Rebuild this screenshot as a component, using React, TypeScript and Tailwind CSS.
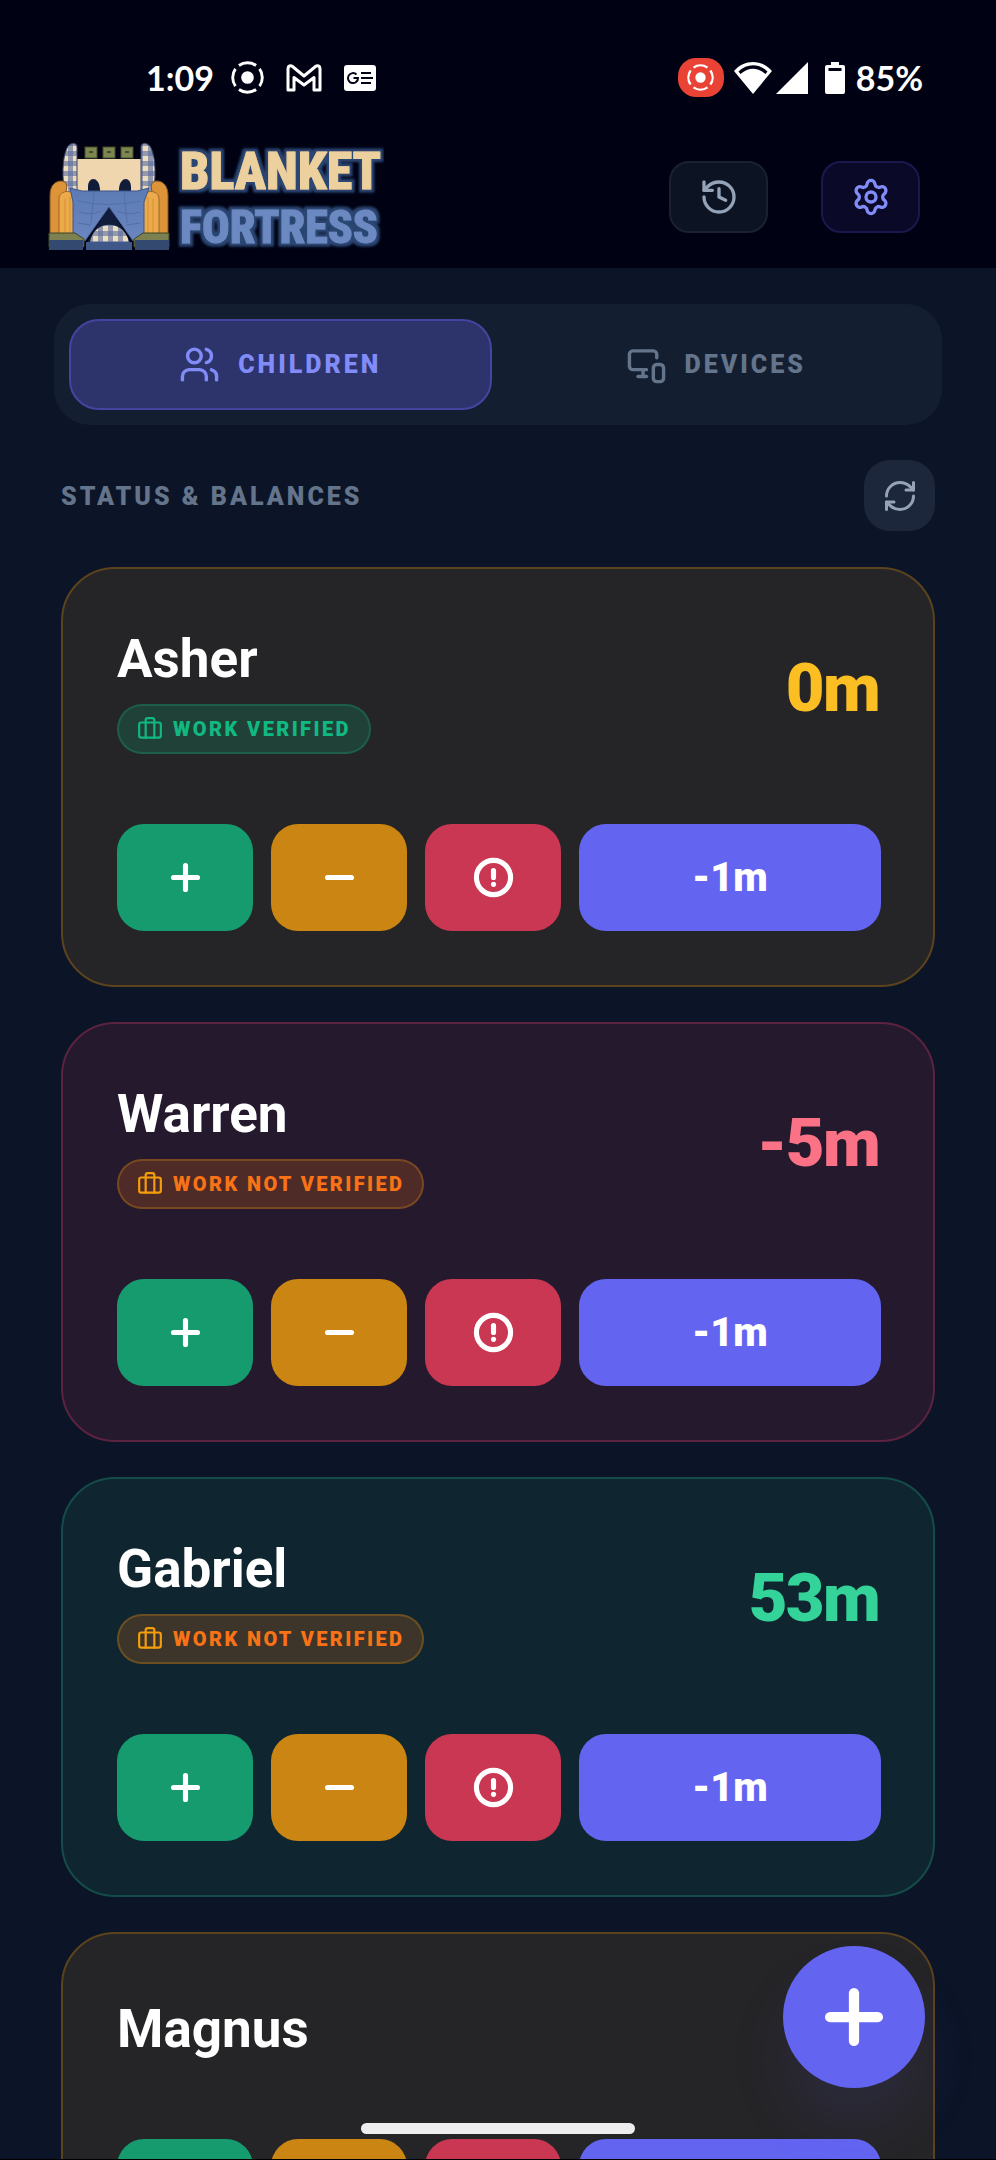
import {
  Briefcase,
  CircleAlert,
  History,
  Minus,
  MonitorSmartphone,
  Plus,
  RefreshCw,
  Settings,
  Users,
} from "lucide-react";

type Tone = "amber" | "rose" | "emerald";

interface Child {
  name: string;
  balance: string;
  tone: Tone;
  work?: "verified" | "pending";
}

const children: Child[] = [
  { name: "Asher", balance: "0m", tone: "amber", work: "verified" },
  { name: "Warren", balance: "-5m", tone: "rose", work: "pending" },
  { name: "Gabriel", balance: "53m", tone: "emerald", work: "pending" },
  { name: "Magnus", balance: "0m", tone: "amber" },
];

const cardTones: Record<Tone, string> = {
  amber: "border-[#5b431d] bg-[#252426]",
  rose: "border-[#5c2340] bg-[#25192d]",
  emerald: "border-[#144c49] bg-[#0f2630]",
};

const balanceTones: Record<Tone, string> = {
  amber: "text-[#fbbf24]",
  rose: "text-[#fb7185]",
  emerald: "text-[#34d399]",
};

function RecordGlyph({ className }: { className: string }) {
  return (
    <svg viewBox="0 0 34 34" className={className} fill="none" stroke="currentColor" strokeWidth="3" aria-hidden="true">
      <circle cx="17" cy="17" r="6.5" fill="currentColor" stroke="none" />
      <path d="M8.2 4.6a15 15 0 0 1 17.6 0M8.2 29.4a15 15 0 0 0 17.6 0M4.6 8.2a15 15 0 0 0 0 17.6M29.4 8.2a15 15 0 0 1 0 17.6" />
    </svg>
  );
}

function StatusBar() {
  return (
    <div className="flex h-[141px] items-center justify-between pt-3.5 pr-[73px] pl-[146px] font-['Lato',sans-serif] text-[34px] leading-10 font-bold text-white">
      <div className="flex items-center">
        <span>1:09</span>
        <RecordGlyph className="ml-[17px] size-[33px]" />
        <svg viewBox="0 0 36 28" className="ml-[22px] h-7 w-9" fill="none" stroke="currentColor" strokeWidth="3" strokeLinejoin="round" aria-hidden="true">
          <path d="M2 26V4.500C2 2 4.500 1 6.500 2.500L18 12 29.500 2.500C31.500 1 34 2 34 4.500V26H28V13.500L18 21 8 13.500V26Z" />
        </svg>
        <svg viewBox="0 0 32 26" className="ml-[22px] h-[26px] w-8" fill="none" aria-hidden="true">
          <rect width="32" height="26" rx="3" fill="#fff" />
          <path d="M12.500 9.500A5 5 0 1 0 14 13H9.500" stroke="#000213" strokeWidth="2" />
          <path d="M17 8h10M17 13h12M17 18h10" stroke="#000213" strokeWidth="2.200" />
        </svg>
      </div>
      <div className="flex items-center">
        <span className="flex h-[39px] w-[46px] items-center justify-center rounded-[18px] bg-[#ea4335]">
          <RecordGlyph className="size-[27px]" />
        </span>
        <svg viewBox="0 0 38 32" className="ml-[10px] h-8 w-[38px]" aria-hidden="true">
          <path d="M0 9C10-3 28-3 38 9L19 32Z" fill="#fff" />
          <path d="M4.500 9.500C13 1 25 1 33.500 9.500L31.500 12C23 5 15 5 6.500 12Z" fill="#000213" />
        </svg>
        <svg viewBox="0 0 32 32" className="ml-1 size-8" fill="#fff" aria-hidden="true">
          <path d="M32 0V32H0Z" />
        </svg>
        <svg viewBox="0 0 20 32" className="ml-[17px] h-8 w-5" fill="#fff" aria-hidden="true">
          <path d="M6 0h8v3h4a2 2 0 0 1 2 2v25a2 2 0 0 1-2 2H2a2 2 0 0 1-2-2V5a2 2 0 0 1 2-2h4Z" />
          <path d="M3.500 6h13v3h-13Z" fill="#000213" />
        </svg>
        <span className="ml-[11px]">85%</span>
      </div>
    </div>
  );
}

function Logo() {
  return (
    <svg viewBox="0 0 336 112" className="h-28 w-[336px]" role="img" aria-label="Blanket Fortress">
      <defs>
        <pattern id="gingham" width="10" height="10" patternUnits="userSpaceOnUse">
          <rect width="10" height="10" fill="#ecdcc0" />
          <rect width="5" height="10" fill="#5a6a9c" opacity=".6" />
          <rect width="10" height="5" fill="#5a6a9c" opacity=".6" />
        </pattern>
        <linearGradient id="quilt" x1="0" y1="0" x2="0" y2="1">
          <stop offset="0" stopColor="#5c7ab4" />
          <stop offset="1" stopColor="#6a86c0" />
        </linearGradient>
        <filter id="outline" x="-10%" y="-20%" width="120%" height="140%">
          <feMorphology in="SourceAlpha" operator="dilate" radius="3" result="grown" />
          <feGaussianBlur in="grown" stdDeviation="1" result="soft" />
          <feFlood floodColor="#2b4673" />
          <feComposite in2="soft" operator="in" result="edge" />
          <feMerge>
            <feMergeNode in="edge" />
            <feMergeNode in="SourceGraphic" />
          </feMerge>
        </filter>
      </defs>

      <path d="M28 18H96V54H28Z" fill="#f0d6ae" />
      <path d="M40 52V46C40 35 51 35 52 48V52ZM71 52V48C72 35 83 35 83 46V52Z" fill="#101c38" />
      <path d="M17 56C14 36 14 18 19 7C22 1 29 1 29 6V56Z" fill="url(#gingham)" stroke="#3c476c" />
      <path d="M105 56C108 36 108 18 103 7C100 1 93 1 93 6V56Z" fill="url(#gingham)" stroke="#3c476c" />
      <g fill="#7d8650" stroke="#444d2a">
        <rect x="37" y="6" width="12" height="11" />
        <rect x="55" y="6" width="12" height="11" />
        <rect x="73" y="6" width="12" height="11" />
      </g>
      <path d="M41 11h4M59 11h4M77 11h4" stroke="#444d2a" strokeWidth="2" />

      <path d="M2 95V54C2 45 7 40 13 40C18 40 20 44 18 50V95Z" fill="#dd9438" stroke="#7f5323" />
      <path d="M120 95V54C120 45 115 40 109 40C104 40 102 44 104 50V95Z" fill="#dd9438" stroke="#7f5323" />
      <path d="M11 95V58C11 48 27 48 28 58V95Z" fill="#edaa4b" stroke="#9a672b" />
      <path d="M111 95V58C111 48 95 48 94 58V95Z" fill="#edaa4b" stroke="#9a672b" />
      <path d="M17 58V92M22 56V92M100 56V92M105 58V92" stroke="#d18e39" />

      <path d="M38 103L61 66 84 103Z" fill="#121d3b" />
      <path d="M42 101C46 78 76 78 81 101Z" fill="url(#gingham)" />
      <path d="M22 47L34 50H89L101 47L96 61V94L85 100L61 66 37 100 25 93V61Z" fill="url(#quilt)" stroke="#3e578a" />
      <path d="M30 60Q60 67 92 60M31 71Q45 75 53 70M69 70Q79 75 92 71M30 82L43 84M78 84L92 82M46 51L43 82M76 51L79 82" stroke="#5270a8" fill="none" />

      <path d="M1 92H27L36 98V106H1ZM121 92H95L86 98V106H121Z" fill="#7b8150" stroke="#3d4426" />
      <path d="M1 99H35V109H1ZM121 99H87V109H121Z" fill="#34496f" />
      <path d="M38 101H84V109H38Z" fill="#3f5789" />

      <g
        fontFamily="'Roboto Condensed', 'Liberation Sans Narrow', 'Liberation Serif', serif"
        fontWeight="800"
        strokeWidth="1"
        strokeLinejoin="round"
        filter="url(#outline)"
      >
        <text x="132" y="48" fontSize="52" fill="#ecd09e" stroke="#ecd09e">
          BLANKET
        </text>
        <text x="132" y="102" fontSize="46" fill="#6c89c2" stroke="#6c89c2">
          FORTRESS
        </text>
      </g>
    </svg>
  );
}

function WorkBadge({ verified }: { verified: boolean }) {
  return (
    <span
      className={`flex h-[50px] items-center gap-[10px] rounded-full border-2 px-[18px] text-[20px] leading-6 font-black tracking-[0.12em] uppercase ${
        verified
          ? "border-[#10b981]/25 bg-[#10b981]/20 text-[#10b981]"
          : "border-[#f59e0b]/25 bg-[#f97316]/20 text-[#f97316]"
      }`}
    >
      <Briefcase
        className={verified ? "size-[26px] text-[#10b981]" : "size-[26px] text-[#f59e0b]"}
        strokeWidth={2}
        aria-hidden="true"
      />
      {verified ? "Work verified" : "Work not verified"}
    </span>
  );
}

function ChildCard({ child }: { child: Child }) {
  const button = "flex h-[107px] items-center justify-center rounded-[27px] text-white";

  return (
    <article className={`rounded-[54px] border-2 py-[54px] pr-[52px] pl-[54px] ${cardTones[child.tone]}`}>
      <div className="flex items-center justify-between pr-0.5">
        <div className="flex flex-col items-start gap-[9px]">
          <h3 className="text-[53px] leading-[72px] font-bold text-white">{child.name}</h3>
          {child.work && <WorkBadge verified={child.work === "verified"} />}
        </div>
        <p className={`text-[67px] leading-[81px] font-black tracking-tight ${balanceTones[child.tone]}`}>
          {child.balance}
        </p>
      </div>

      <div className="mt-[70px] grid grid-cols-[1fr_1fr_1fr_2.22fr] gap-[18px]">
        <button type="button" aria-label={`Add time for ${child.name}`} className={`${button} bg-[#169b6f]`}>
          <Plus size={41} strokeWidth={3} />
        </button>
        <button type="button" aria-label={`Remove time for ${child.name}`} className={`${button} bg-[#ca8512]`}>
          <Minus size={41} strokeWidth={3} />
        </button>
        <button type="button" aria-label={`Penalty for ${child.name}`} className={`${button} bg-[#ca3753]`}>
          <CircleAlert size={41} strokeWidth={3} />
        </button>
        <button type="button" className={`${button} bg-[#6364f0] text-[40px] leading-none font-black`}>
          -1m
        </button>
      </div>
    </article>
  );
}

export default function App() {
  return (
    <div className="relative flex h-screen flex-col overflow-hidden border-b border-black bg-[#0c1527] font-['Roboto',sans-serif]">
      <header className="shrink-0 bg-[#000213] pb-[15px]">
        <StatusBar />
        <div className="flex items-center justify-between pr-[76px] pl-12">
          <Logo />
          <div className="flex gap-[53px]">
            <button
              type="button"
              aria-label="History"
              className="flex h-[72px] w-[99px] items-center justify-center rounded-[20px] border-2 border-[#1a2130] bg-[#0c1424] text-[#94a3b8]"
            >
              <History size={40} />
            </button>
            <button
              type="button"
              aria-label="Settings"
              className="flex h-[72px] w-[99px] items-center justify-center rounded-[20px] border-2 border-[#1a184c] bg-[#0a0a28] text-[#818cf8]"
            >
              <Settings size={40} />
            </button>
          </div>
        </div>
      </header>

      <main className="flex min-h-0 flex-1 flex-col">
        <div role="tablist" className="mx-[54px] mt-9 flex shrink-0 gap-[13px] rounded-[36px] bg-[#131f30] p-[15px]">
          <button
            type="button"
            role="tab"
            aria-selected="true"
            className="flex h-[91px] flex-1 items-center justify-center gap-[18px] rounded-[30px] border-2 border-[#4644a0] bg-[#2d336b] text-[25px] font-black tracking-[0.12em] text-[#818cf8] uppercase"
          >
            <Users size={41} />
            Children
          </button>
          <button
            type="button"
            role="tab"
            aria-selected="false"
            className="flex h-[91px] flex-1 items-center justify-center gap-[18px] rounded-[30px] border-2 border-transparent text-[25px] font-black tracking-[0.12em] text-[#64748b] uppercase"
          >
            <MonitorSmartphone size={41} />
            Devices
          </button>
        </div>

        <section className="mt-[35px] px-[61px]">
          <div className="flex items-center justify-between">
            <h2 className="pt-0.5 text-[25px] font-black tracking-[0.12em] text-[#64748b] uppercase">
              Status &amp; balances
            </h2>
            <button
              type="button"
              aria-label="Refresh"
              className="flex size-[71px] items-center justify-center rounded-[26px] bg-[#1d273b] text-[#94a3b8]"
            >
              <RefreshCw size={36} />
            </button>
          </div>

          <div className="mt-9 flex flex-col gap-[35px]">
            {children.map((child) => (
              <ChildCard key={child.name} child={child} />
            ))}
          </div>
        </section>
      </main>

      <button
        type="button"
        aria-label="Add child"
        className="absolute right-[71px] bottom-[71px] flex size-[142px] items-center justify-center rounded-full bg-[#6364f0] text-white shadow-[0_40px_60px_rgba(99,102,241,0.1)]"
      >
        <Plus size={82} strokeWidth={3} />
      </button>
      <div className="absolute bottom-[25px] left-1/2 h-[11px] w-[274px] -translate-x-1/2 rounded-full bg-[#eeeeee]" />
    </div>
  );
}
